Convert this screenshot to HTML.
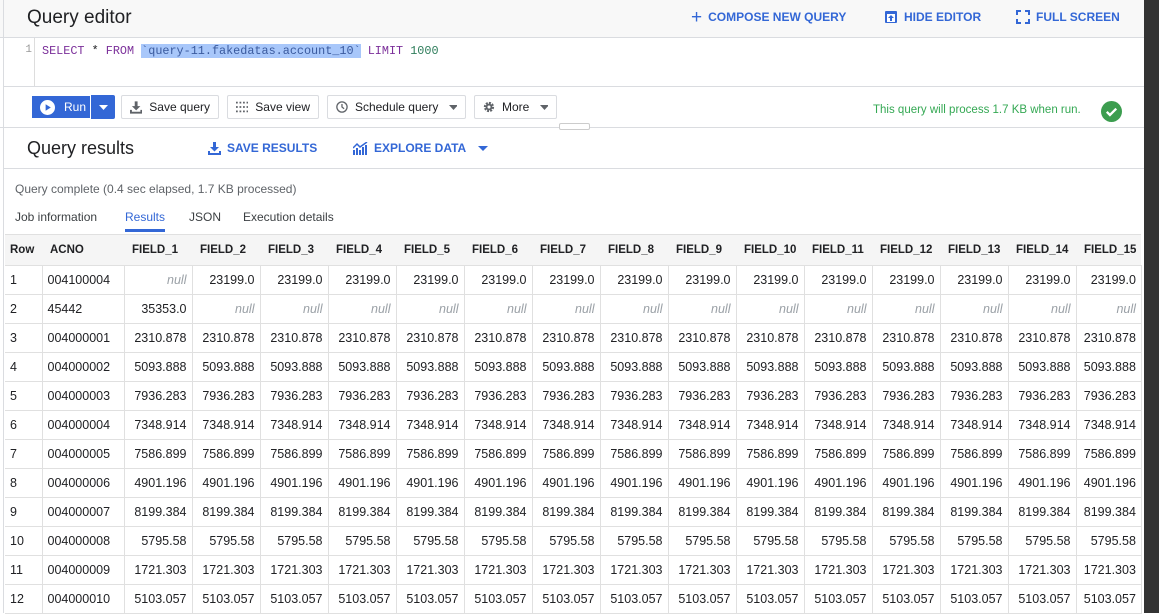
<!DOCTYPE html>
<html><head><style>
*{box-sizing:border-box;margin:0;padding:0}
body{width:1159px;height:613px;overflow:hidden;background:#fff;font-family:"Liberation Sans",sans-serif;position:relative;color:#202124}
.abs{position:absolute}
.hdr{left:0;top:0;width:1144px;height:38px;background:#f8f8f8;border-bottom:1px solid #dadce0}
.title{left:27px;top:7px;font-size:19px;color:#202124}
.link{color:#3367d6;font-size:12px;font-weight:bold;top:10px;display:flex;align-items:center;gap:6px;white-space:nowrap}
.editor{left:3px;top:38px;width:1141px;height:49px;border-bottom:1px solid #dadce0;border-left:1px solid #ddd}
.gutter{left:0;top:0;width:31px;height:48px;border-right:1px solid #ddd;background:#fff;font:11px "Liberation Mono",monospace;color:#999;text-align:right;padding:6px 2px 0 0}
.code{left:38px;top:6px;font:11.8px "Liberation Mono",monospace;white-space:pre}
.kw{color:#7b2f9a}.num{color:#2e7d5b}.sel{background:#a8c7fa;color:#3a5a9e}
.btn{top:95px;height:24px;border:1px solid #dadce0;border-radius:2px;background:#fff;font-size:12px;display:flex;align-items:center;gap:7px;padding:0 8px;color:#202124;white-space:nowrap}
.run{left:31px;top:95px;width:84px;height:24px;background:#3367d6;border-radius:2px;display:flex}
.sep{left:0;top:127px;width:1144px;border-top:1px solid #dadce0}
.rtitle{left:27px;top:138px;font-size:18px}
.status{left:15px;top:182px;font-size:12px;color:#5f6368}
.tab{top:210px;font-size:12px;color:#3c4043}
table{position:absolute;left:5px;top:234px;border-collapse:collapse;table-layout:fixed;font-size:12.5px}
td,th{height:29px;border:1px solid #e0e0e0;padding:0 5px;white-space:nowrap;overflow:hidden}
th{background:#f5f5f5;font-weight:bold;font-size:11.5px;text-align:left;height:31px;border-left:none;border-right:none}
th+th{padding-left:8px}
td{text-align:right}
td.l{text-align:left}
td.n{color:#9aa0a6;font-style:italic}
tr td:first-child{border-left:none}
.dark{left:1144px;top:0;width:15px;height:613px;background:#333}
</style></head><body>
<div class="abs hdr"></div>
<div class="abs title">Query editor</div>
<div class="abs link" style="left:691px"><span style="font-size:19px;font-weight:normal;line-height:13px">+</span>COMPOSE NEW QUERY</div>
<div class="abs link" style="left:884px"><svg width="14" height="14" viewBox="0 0 14 14"><rect x="1" y="1" width="12" height="12" rx="1" fill="#3367d6"/><rect x="3" y="4" width="8" height="8" fill="#fff"/><path d="M7 5l-3 3h2v3h2V8h2z" fill="#3367d6"/></svg>HIDE EDITOR</div>
<div class="abs link" style="left:1016px"><svg width="14" height="14" viewBox="0 0 14 14" fill="none" stroke="#3367d6" stroke-width="2"><path d="M1 5V1h4M9 1h4v4M13 9v4H9M5 13H1V9"/></svg>FULL SCREEN</div>
<div class="abs editor"><div class="abs gutter">1</div><div class="abs code"><span class="kw">SELECT</span> * <span class="kw">FROM</span> <span class="sel">`query-11.fakedatas.account_10`</span> <span class="kw">LIMIT</span> <span class="num">1000</span></div></div>
<div class="abs run"><div style="width:60px;height:24px;border:1px solid #fff;display:flex;align-items:center;gap:9px;padding-left:8px;color:#fff;font-size:12px"><svg width="15" height="15" viewBox="0 0 16 16"><circle cx="8" cy="8" r="8" fill="#fff"/><path d="M6 4.5v7l5.5-3.5z" fill="#3367d6"/></svg>Run</div><div style="flex:1;display:flex;align-items:center;justify-content:center"><svg width="9" height="5"><path d="M0 0h9L4.5 5z" fill="#fff"/></svg></div></div>
<div class="abs btn" style="left:121px;width:98px"><svg width="13" height="13" viewBox="0 0 13 13"><path d="M5 0h3v5h3L6.5 9.5 2 5h3z M0 9h2v2h9V9h2v4H0z" fill="#5f6368"/></svg>Save query</div>
<div class="abs btn" style="left:227px;width:92px"><svg width="14" height="12" viewBox="0 0 14 12" fill="#5f6368"><g><rect x="0" y="0" width="2" height="2"/><rect x="4" y="0" width="2" height="2"/><rect x="8" y="0" width="2" height="2"/><rect x="12" y="0" width="2" height="2"/><rect x="0" y="5" width="2" height="2"/><rect x="4" y="5" width="2" height="2"/><rect x="8" y="5" width="2" height="2"/><rect x="12" y="5" width="2" height="2"/><rect x="0" y="10" width="2" height="2"/><rect x="4" y="10" width="2" height="2"/><rect x="8" y="10" width="2" height="2"/><rect x="12" y="10" width="2" height="2"/></g></svg>Save view</div>
<div class="abs btn" style="left:327px;width:139px"><svg width="14" height="14" viewBox="0 0 14 14" fill="none" stroke="#5f6368" stroke-width="1.5"><circle cx="7" cy="7" r="6"/><path d="M7 3.5V7l2.5 2"/></svg>Schedule query<svg width="9" height="5" style="margin-left:4px"><path d="M0 0h9L4.5 5z" fill="#5f6368"/></svg></div>
<div class="abs btn" style="left:474px;width:83px"><svg width="14" height="14" viewBox="0 0 14 14"><circle cx="7" cy="7" r="4.5" fill="none" stroke="#5f6368" stroke-width="3" stroke-dasharray="2.2 1.3"/><circle cx="7" cy="7" r="4" fill="#5f6368"/><circle cx="7" cy="7" r="1.8" fill="#fff"/></svg>More<svg width="9" height="5" style="margin-left:4px"><path d="M0 0h9L4.5 5z" fill="#5f6368"/></svg></div>
<div class="abs" style="left:873px;top:104px;font-size:11.5px;color:#34a853;white-space:nowrap">This query will process 1.7 KB when run.</div>
<svg class="abs" style="left:1101px;top:101px" width="21" height="21" viewBox="0 0 20 20"><circle cx="10" cy="10" r="10" fill="#3c9d4f"/><path d="M5.5 10.3l3 3 6-6" stroke="#fff" stroke-width="2.2" fill="none"/></svg>
<div class="abs sep"></div>
<div class="abs" style="left:559px;top:123px;width:31px;height:7px;border:1px solid #ccc;border-radius:2px;background:#fff"></div>
<div class="abs rtitle">Query results</div>
<div class="abs link" style="left:208px;top:141px"><svg width="13" height="13" viewBox="0 0 13 13"><path d="M5 0h3v5h3L6.5 9.5 2 5h3z M0 9h2v2h9V9h2v4H0z" fill="#3367d6"/></svg>SAVE RESULTS</div>
<div class="abs link" style="left:353px;top:141px"><svg width="15" height="13" viewBox="0 0 15 13" fill="#3367d6"><rect x="0" y="8" width="2" height="5"/><rect x="3" y="6" width="2" height="7"/><rect x="6" y="8" width="2" height="5"/><rect x="9" y="5" width="2" height="8"/><rect x="12" y="3" width="2" height="10"/><path d="M0 6l4-4 3 3 7-5" stroke="#3367d6" stroke-width="1.5" fill="none"/></svg>EXPLORE DATA<svg width="10" height="5" style="margin-left:6px"><path d="M0 0h10L5 5z" fill="#3367d6"/></svg></div>
<div class="abs" style="left:3px;top:168px;width:1141px;border-top:1px solid #dadce0"></div>
<div class="abs" style="left:3px;top:0;height:613px;border-left:1px solid #dadce0"></div>
<div class="abs status">Query complete (0.4 sec elapsed, 1.7 KB processed)</div>
<div class="abs tab" style="left:15px">Job information</div>
<div class="abs tab" style="left:125px;color:#3367d6">Results</div>
<div class="abs" style="left:125px;top:229px;width:40px;height:3px;background:#3367d6"></div>
<div class="abs tab" style="left:189px">JSON</div>
<div class="abs tab" style="left:243px">Execution details</div>
<table>
<colgroup><col style="width:37px"><col style="width:82px"><col style="width:68px"><col style="width:68px"><col style="width:68px"><col style="width:68px"><col style="width:68px"><col style="width:68px"><col style="width:68px"><col style="width:68px"><col style="width:68px"><col style="width:68px"><col style="width:68px"><col style="width:68px"><col style="width:68px"><col style="width:68px"><col style="width:64px"></colgroup>
<tr><th>Row</th><th>ACNO</th><th>FIELD_1</th><th>FIELD_2</th><th>FIELD_3</th><th>FIELD_4</th><th>FIELD_5</th><th>FIELD_6</th><th>FIELD_7</th><th>FIELD_8</th><th>FIELD_9</th><th>FIELD_10</th><th>FIELD_11</th><th>FIELD_12</th><th>FIELD_13</th><th>FIELD_14</th><th>FIELD_15</th></tr>
<tr><td class="l">1</td><td class="l">004100004</td><td class="n">null</td><td>23199.0</td><td>23199.0</td><td>23199.0</td><td>23199.0</td><td>23199.0</td><td>23199.0</td><td>23199.0</td><td>23199.0</td><td>23199.0</td><td>23199.0</td><td>23199.0</td><td>23199.0</td><td>23199.0</td><td>23199.0</td></tr>
<tr><td class="l">2</td><td class="l">45442</td><td>35353.0</td><td class="n">null</td><td class="n">null</td><td class="n">null</td><td class="n">null</td><td class="n">null</td><td class="n">null</td><td class="n">null</td><td class="n">null</td><td class="n">null</td><td class="n">null</td><td class="n">null</td><td class="n">null</td><td class="n">null</td><td class="n">null</td></tr>
<tr><td class="l">3</td><td class="l">004000001</td><td>2310.878</td><td>2310.878</td><td>2310.878</td><td>2310.878</td><td>2310.878</td><td>2310.878</td><td>2310.878</td><td>2310.878</td><td>2310.878</td><td>2310.878</td><td>2310.878</td><td>2310.878</td><td>2310.878</td><td>2310.878</td><td>2310.878</td></tr>
<tr><td class="l">4</td><td class="l">004000002</td><td>5093.888</td><td>5093.888</td><td>5093.888</td><td>5093.888</td><td>5093.888</td><td>5093.888</td><td>5093.888</td><td>5093.888</td><td>5093.888</td><td>5093.888</td><td>5093.888</td><td>5093.888</td><td>5093.888</td><td>5093.888</td><td>5093.888</td></tr>
<tr><td class="l">5</td><td class="l">004000003</td><td>7936.283</td><td>7936.283</td><td>7936.283</td><td>7936.283</td><td>7936.283</td><td>7936.283</td><td>7936.283</td><td>7936.283</td><td>7936.283</td><td>7936.283</td><td>7936.283</td><td>7936.283</td><td>7936.283</td><td>7936.283</td><td>7936.283</td></tr>
<tr><td class="l">6</td><td class="l">004000004</td><td>7348.914</td><td>7348.914</td><td>7348.914</td><td>7348.914</td><td>7348.914</td><td>7348.914</td><td>7348.914</td><td>7348.914</td><td>7348.914</td><td>7348.914</td><td>7348.914</td><td>7348.914</td><td>7348.914</td><td>7348.914</td><td>7348.914</td></tr>
<tr><td class="l">7</td><td class="l">004000005</td><td>7586.899</td><td>7586.899</td><td>7586.899</td><td>7586.899</td><td>7586.899</td><td>7586.899</td><td>7586.899</td><td>7586.899</td><td>7586.899</td><td>7586.899</td><td>7586.899</td><td>7586.899</td><td>7586.899</td><td>7586.899</td><td>7586.899</td></tr>
<tr><td class="l">8</td><td class="l">004000006</td><td>4901.196</td><td>4901.196</td><td>4901.196</td><td>4901.196</td><td>4901.196</td><td>4901.196</td><td>4901.196</td><td>4901.196</td><td>4901.196</td><td>4901.196</td><td>4901.196</td><td>4901.196</td><td>4901.196</td><td>4901.196</td><td>4901.196</td></tr>
<tr><td class="l">9</td><td class="l">004000007</td><td>8199.384</td><td>8199.384</td><td>8199.384</td><td>8199.384</td><td>8199.384</td><td>8199.384</td><td>8199.384</td><td>8199.384</td><td>8199.384</td><td>8199.384</td><td>8199.384</td><td>8199.384</td><td>8199.384</td><td>8199.384</td><td>8199.384</td></tr>
<tr><td class="l">10</td><td class="l">004000008</td><td>5795.58</td><td>5795.58</td><td>5795.58</td><td>5795.58</td><td>5795.58</td><td>5795.58</td><td>5795.58</td><td>5795.58</td><td>5795.58</td><td>5795.58</td><td>5795.58</td><td>5795.58</td><td>5795.58</td><td>5795.58</td><td>5795.58</td></tr>
<tr><td class="l">11</td><td class="l">004000009</td><td>1721.303</td><td>1721.303</td><td>1721.303</td><td>1721.303</td><td>1721.303</td><td>1721.303</td><td>1721.303</td><td>1721.303</td><td>1721.303</td><td>1721.303</td><td>1721.303</td><td>1721.303</td><td>1721.303</td><td>1721.303</td><td>1721.303</td></tr>
<tr><td class="l">12</td><td class="l">004000010</td><td>5103.057</td><td>5103.057</td><td>5103.057</td><td>5103.057</td><td>5103.057</td><td>5103.057</td><td>5103.057</td><td>5103.057</td><td>5103.057</td><td>5103.057</td><td>5103.057</td><td>5103.057</td><td>5103.057</td><td>5103.057</td><td>5103.057</td></tr>
</table>
<div class="abs dark"></div>
</body></html>
